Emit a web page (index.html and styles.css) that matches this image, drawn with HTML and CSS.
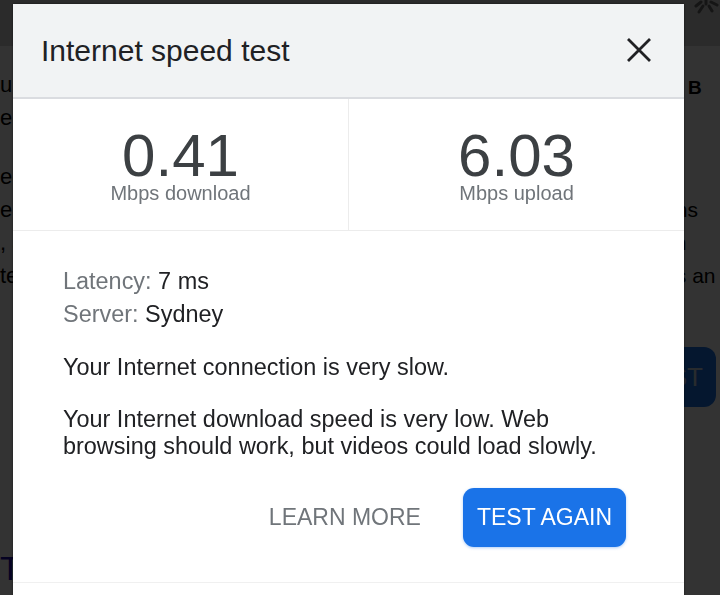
FILE: index.html
```html
<!DOCTYPE html>
<html lang="en">
<head>
<meta charset="utf-8">
<title>Internet speed test</title>
<link rel="stylesheet" href="styles.css">
</head>
<body>
<div class="page">
  <header class="page-top">
    <svg class="page-logo" width="30" height="20" viewBox="0 0 30 20" aria-hidden="true">
      <g stroke="#6a6a6a" stroke-width="3" stroke-linecap="round">
        <line x1="16" y1="-2" x2="16" y2="4"/>
        <line x1="11" y1="2" x2="6" y2="6"/>
        <line x1="13" y1="6" x2="9" y2="12"/>
        <line x1="19" y1="6" x2="22" y2="11"/>
        <line x1="21" y1="2" x2="27" y2="5"/>
      </g>
    </svg>
  </header>
  <main class="page-main">
    <div class="col-left">
      <p class="bg-para"><span class="bg-line">ur</span><span class="bg-line">e</span></p>
      <p class="bg-para second"><span class="bg-line">ec</span><span class="bg-line">e</span><span class="bg-line">, a</span><span class="bg-line">te</span></p>
      <p class="bg-heading">Th</p>
    </div>
    <div class="col-right">
      <span class="bg-line bold">B</span>
      <span class="bg-line gap1">ms</span>
      <span class="bg-line">in</span>
      <span class="bg-line">ts an</span>
      <span class="bg-button">TEST</span>
    </div>
  </main>
</div>

<div class="overlay">
  <section class="dialog" role="dialog" aria-label="Internet speed test">
    <div class="dialog-head">
      <h1 class="dialog-title">Internet speed test</h1>
      <svg class="close" width="24" height="24" viewBox="0 0 24 24" aria-label="Close">
        <path d="M1 1 L23 23 M23 1 L1 23" stroke="#202124" stroke-width="2.8" fill="none"/>
      </svg>
    </div>
    <div class="stats">
      <div class="stat">
        <div class="stat-num">0.41</div>
        <div class="stat-label">Mbps download</div>
      </div>
      <div class="stat">
        <div class="stat-num">6.03</div>
        <div class="stat-label">Mbps upload</div>
      </div>
    </div>
    <div class="dialog-body">
      <div class="meta"><span class="meta-key">Latency:</span> 7 ms</div>
      <div class="meta meta-second"><span class="meta-key">Server:</span> Sydney</div>
      <p class="msg msg-first">Your Internet connection is very slow.</p>
      <p class="msg">Your Internet download speed is very low. Web browsing should work, but videos could load slowly.</p>
      <div class="actions">
        <span class="btn-text">LEARN MORE</span>
        <span class="btn-primary">TEST AGAIN</span>
      </div>
    </div>
    <div class="dialog-foot"></div>
  </section>
</div>
</body>
</html>
```

FILE: styles.css
```css
* { box-sizing: border-box; }

html, body {
  margin: 0;
  padding: 0;
  width: 720px;
  height: 595px;
  overflow: hidden;
  font-family: "Liberation Sans", Arial, sans-serif;
  background: #ffffff;
}

/* ---------- background page (dimmed by overlay) ---------- */
.page {
  width: 720px;
  height: 595px;
  display: flex;
  flex-direction: column;
  color: #000;
}

.page-top {
  height: 46px;
  background: #d6d6d6;
  display: flex;
  justify-content: flex-end;
  align-items: flex-start;
}

.page-logo { display: block; }

.page-main {
  flex: 1;
  display: flex;
  justify-content: space-between;
}

.col-left {
  width: 60px;
  padding-top: 22px;
  display: flex;
  flex-direction: column;
  font-size: 22px;
}

.bg-para {
  margin: 0;
  display: flex;
  flex-direction: column;
}

.bg-para.second { margin-top: 26px; }

.bg-line {
  display: block;
  height: 33px;
  line-height: 33px;
  white-space: nowrap;
}

.bg-heading {
  margin: 256px 0 0 0;
  font-size: 34px;
  line-height: 40px;
  color: #1a0dab;
}

.col-right {
  width: 50px;
  padding-top: 25px;
  display: flex;
  flex-direction: column;
  font-size: 21px;
}

.col-right .bold { font-weight: bold; font-size: 19px; padding-left: 18px; }
.col-right .gap1 { margin-top: 89px; }

.bg-button {
  margin-top: 55px;
  width: 46px;
  height: 60px;
  border-radius: 0 12px 12px 0;
  background: #1a73e8;
  color: #c8d4e6;
  display: flex;
  align-items: center;
  justify-content: flex-end;
  padding-right: 13px;
  font-size: 26px;
  overflow: hidden;
}

/* ---------- overlay + dialog ---------- */
.overlay {
  position: fixed;
  inset: 0;
  background: rgba(0, 0, 0, 0.8);
  padding: 4px 0 0 13px;
}

.dialog {
  width: 671px;
  height: 640px;
  background: #ffffff;
  box-shadow: 0 0 2px rgba(0, 0, 0, 0.6);
  display: flex;
  flex-direction: column;
}

.dialog-head {
  height: 95px;
  background: #f1f3f4;
  border-bottom: 2px solid #dadce0;
  display: flex;
  align-items: center;
  justify-content: space-between;
  padding: 0 33px 0 28px;
}

.dialog-title {
  margin: 0;
  font-size: 30px;
  font-weight: normal;
  color: #202124;
}

.close { display: block; margin-bottom: 2px; }

.stats {
  display: flex;
  border-bottom: 1px solid #ececec;
}

.stat {
  flex: 1;
  display: flex;
  flex-direction: column;
  align-items: center;
  padding: 32px 0 27px;
}

.stat + .stat { border-left: 1px solid #ececec; }

.stat-num {
  font-size: 60px;
  line-height: 50px;
  color: #3c4043;
}

.stat-label {
  margin-top: 2px;
  font-size: 20px;
  line-height: 20px;
  color: #70757a;
}

.dialog-body {
  padding: 37px 58px 35px 50px;
  font-size: 23.45px;
  line-height: 27px;
  color: #202124;
}

.meta-key { color: #70757a; }
.meta-second { margin-top: 6px; }

.msg { margin: 25px 0 0 0; }
.msg-first { margin-top: 26px; }

.actions {
  margin-top: 28px;
  display: flex;
  justify-content: flex-end;
  align-items: center;
  gap: 42px;
}

.btn-text {
  color: #70757a;
  font-size: 23px;
}

.btn-primary {
  height: 59px;
  padding: 0 14px;
  display: flex;
  align-items: center;
  background: #1a73e8;
  color: #ffffff;
  font-size: 23px;
  border-radius: 11px;
  box-shadow: 0 1px 3px rgba(26, 115, 232, 0.35);
}

.dialog-foot {
  border-top: 1px solid #f0f0f0;
  flex: 1;
}
```
